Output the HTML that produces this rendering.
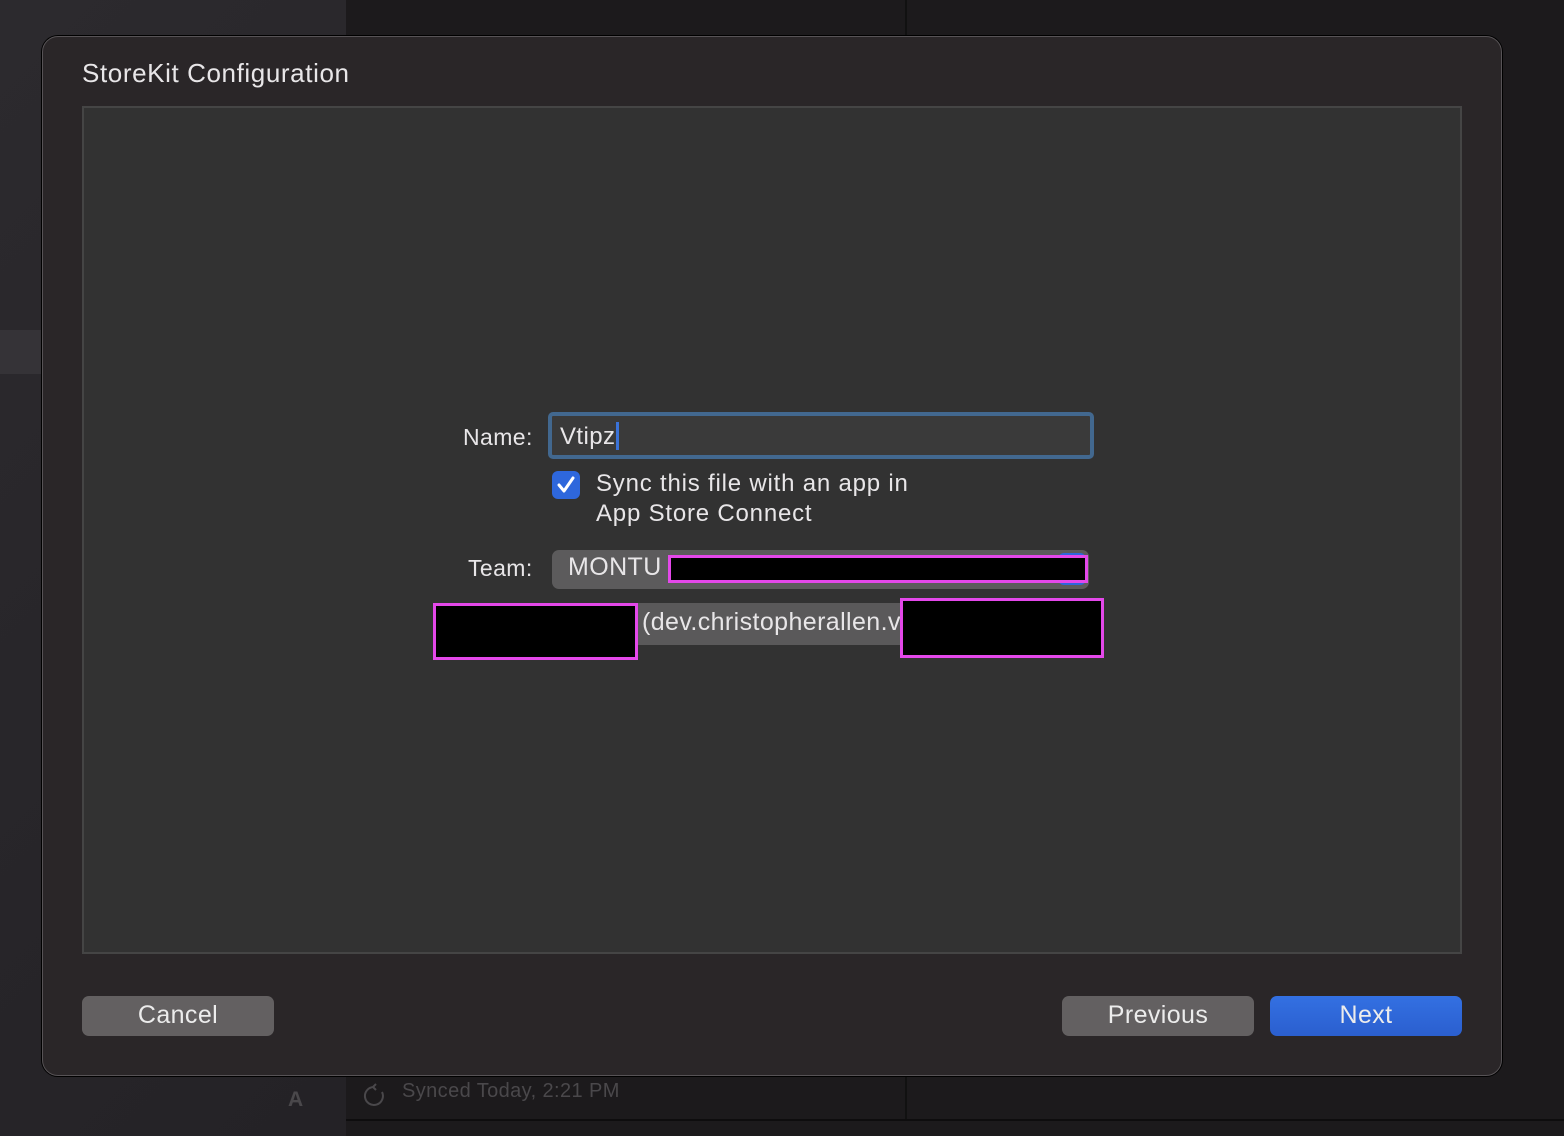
<!DOCTYPE html>
<html><head><style>
body{margin:0;width:1564px;height:1136px;overflow:hidden;background:#1c1a1c;font-family:"Liberation Sans",sans-serif;position:relative}
div{position:absolute;box-sizing:border-box}
.t{color:#e8e6e8;white-space:nowrap;letter-spacing:0.4px}
.btn{height:40px;border-radius:7px;color:#ececec;font-size:25px;text-align:center;line-height:38px;letter-spacing:0.4px}
.red{border:3px solid #e448ea;background:#000}
</style></head><body>
<div style="left:0;top:0;width:346px;height:1136px;background:linear-gradient(135deg,#2c2a2e,#242226)"></div>
<div style="left:0;top:330px;width:44px;height:44px;background:#353337"></div>
<div style="left:905px;top:0;width:2px;height:36px;background:#111"></div>
<div style="left:905px;top:1075px;width:2px;height:45px;background:#111"></div>
<div style="left:346px;top:1119px;width:1218px;height:2px;background:#0e0d0e"></div>
<div class="t" style="left:288px;top:1088px;font-size:21px;font-weight:bold;color:#4a484b">A</div>
<svg style="position:absolute;left:360px;top:1080px" width="28" height="28" viewBox="0 0 28 28"><path d="M16 4 L13 7 L16 10 M14 7 A9 9 0 1 0 22 12" fill="none" stroke="#4a484b" stroke-width="2"/></svg>
<div class="t" style="left:402px;top:1080px;font-size:20px;color:#4a484b">Synced Today, 2:21 PM</div>

<div style="left:42px;top:36px;width:1460px;height:1040px;background:#2a2628;border:1.5px solid #575356;border-radius:16px;box-shadow:0 0 0 1px #000"></div>
<div class="t" style="left:82px;top:58px;font-size:26px;letter-spacing:0.6px">StoreKit Configuration</div>
<div style="left:82px;top:106px;width:1380px;height:848px;background:#323232;border:2px solid #454545"></div>

<div class="t" style="left:463px;top:424px;font-size:23px">Name:</div>
<div style="left:548px;top:412px;width:546px;height:47px;border:4px solid #42688f;border-radius:5px;background:#3a3a3a"></div>
<div class="t" style="left:560px;top:423px;font-size:24px">Vtipz</div>
<div style="left:616px;top:422px;width:3px;height:28px;background:#3a72d8"></div>
<div style="left:552px;top:471px;width:28px;height:28px;background:#2e67dc;border-radius:6px"></div>
<svg style="position:absolute;left:552px;top:471px" width="28" height="28"><path d="M7 14 L12 20 L21 7" fill="none" stroke="#fff" stroke-width="3" stroke-linecap="round" stroke-linejoin="round"/></svg>
<div class="t" style="left:596px;top:469px;font-size:24px;line-height:30px;letter-spacing:0.8px">Sync this file with an app in<br>App Store Connect</div>

<div class="t" style="left:468px;top:555px;font-size:23px">Team:</div>
<div style="left:552px;top:550px;width:537px;height:39px;background:#5c5b5c;border-radius:7px"></div>
<div style="left:1058px;top:553px;width:28px;height:32px;background:#2e67dc;border-radius:6px"></div>
<div class="t" style="left:568px;top:553px;font-size:25px">MONTU</div>
<div class="red" style="left:668px;top:555px;width:420px;height:28px"></div>
<div style="left:636px;top:603px;width:266px;height:42px;background:#5a595a"></div>
<div class="t" style="left:642px;top:608px;font-size:25px">(dev.christopherallen.v</div>
<div class="red" style="left:433px;top:603px;width:205px;height:57px"></div>
<div class="red" style="left:900px;top:598px;width:204px;height:60px"></div>

<div class="btn" style="left:82px;top:996px;width:192px;background:#636061">Cancel</div>
<div class="btn" style="left:1062px;top:996px;width:192px;background:#636061">Previous</div>
<div class="btn" style="left:1270px;top:996px;width:192px;background:linear-gradient(#3370e2,#2b5fcf)">Next</div>
</body></html>
